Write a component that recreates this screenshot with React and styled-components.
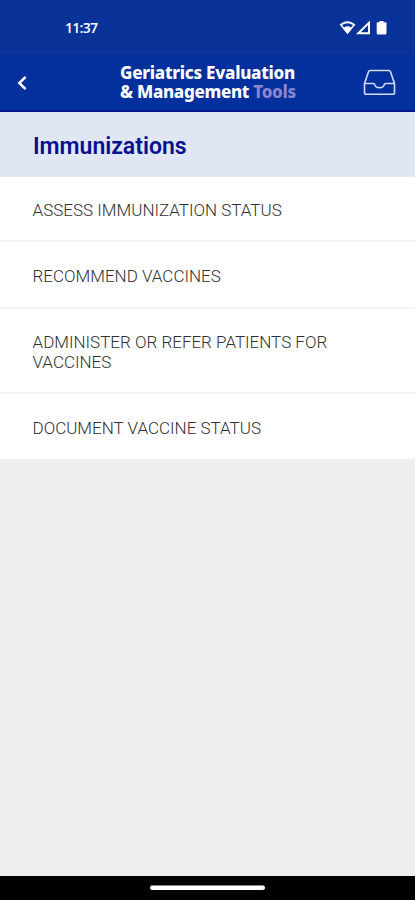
import styled, { createGlobalStyle } from 'styled-components'

const GlobalStyle = createGlobalStyle`
    body {
        margin: 0;
        background: #eeeeee;
    }
    * {
        box-sizing: border-box;
    }
`
const Screen = styled.div`
    display: flex;
    flex-direction: column;
    height: 900px;
    background: #eeeeee;
    font-family: Roboto, "Liberation Sans", sans-serif;
`
const StatusBar = styled.div`
    display: flex;
    align-items: center;
    justify-content: space-between;
    height: 55px;
    padding: 0 26px 0 65px;
    background: #0a3399;
    color: #fff;
`
const Clock = styled.span`
    font-family: "Open Sans", sans-serif;
    font-size: 14px;
    font-weight: 600;
    letter-spacing: -0.7px;
`
const StatusIcons = styled.div`
    display: flex;
    align-items: center;
`
const NavBar = styled.header`
    display: flex;
    align-items: center;
    height: 57px;
    padding: 0 19px 0 17px;
    background: #03309c;
    border-bottom: 2px solid #021a8c;
`
const IconButton = styled.button`
    display: flex;
    padding: 0;
    border: none;
    background: none;
    color: #fff;
`
const Brand = styled.h1`
    flex: 1;
    margin: -2px 0 0 93px;
    font-family: "Noto Sans", sans-serif;
    font-size: 17px;
    font-weight: 800;
    line-height: 19px;
    color: #fff;
    white-space: nowrap;
`
const BrandLine = styled.span`
    display: block;
    letter-spacing: ${props => props.$spacing};
`
const Muted = styled.span`
    color: #8c86cf;
`
const Title = styled.h2`
    display: flex;
    align-items: center;
    height: 65px;
    margin: 0;
    padding: 3px 33px 0;
    background: #e1e6f4;
    color: #06118f;
    font-size: 23px;
    font-weight: 600;
`
const List = styled.ul`
    margin: 0;
    padding: 0;
    list-style: none;
    background: #fff;
`
const Item = styled.li`
    display: flex;
    align-items: center;
    height: ${props => props.$height}px;
    padding: 3px 60px 0 32.5px;
    border-bottom: 2px solid #f5f5f5;
    color: #303030;
    font-size: 17px;
    font-weight: 300;
    line-height: 20px;

    &:nth-child(2),
    &:nth-child(3) {
        padding-top: 2px;
    }

    &:last-child {
        padding-top: 2px;
        border-bottom: none;
    }
`
const GestureBar = styled.div`
    display: flex;
    justify-content: center;
    height: 24px;
    margin-top: auto;
    padding-top: 9px;
    background: #000;
`
const Handle = styled.div`
    width: 115px;
    height: 5px;
    border-radius: 3px;
    background: #fff;
    border-top: 1px solid #888;
`

const items = [
    { label: 'ASSESS IMMUNIZATION STATUS', height: 65 },
    { label: 'RECOMMEND VACCINES', height: 67 },
    { label: 'ADMINISTER OR REFER PATIENTS FOR VACCINES', height: 85 },
    { label: 'DOCUMENT VACCINE STATUS', height: 65 },
]

const App = () => {
    return (
        <>
            <GlobalStyle />
            <Screen>
                <StatusBar>
                    <Clock>11:37</Clock>
                    <StatusIcons>
                        <svg width="50" height="16" viewBox="0 0 50 16">
                            <path d="M1.2 4.6Q8.500 -1.2 15.800 4.6L8.500 13.800Z" fill="#fff" stroke="#fff" strokeLinejoin="round" />
                            <path d="M3 5Q8.500 1.4 14 5L12 7.600Q8.500 5 5 7.600Z" fill="#0a3399" />
                            <path d="M19.300 13.300L30 2.800V13.300Z" fill="none" stroke="#fff" strokeWidth="1.9" />
                            <path d="M40.500 1h4v1.300h2q1 0 1 1V13q0 1.500-1.500 1.500h-7Q37.700 14.500 37.700 13V3.300q0-1 1-1h1.800Z" fill="#fff" />
                        </svg>
                    </StatusIcons>
                </StatusBar>
                <NavBar>
                    <IconButton aria-label="Back">
                        <svg width="10" height="16" viewBox="0 0 10 16">
                            <path d="M8.600 1.800L2.300 8L8.600 14.200" fill="none" stroke="#fff" strokeWidth="2.500" />
                        </svg>
                    </IconButton>
                    <Brand>
                        <BrandLine $spacing="-0.25px">Geriatrics Evaluation</BrandLine>
                        <BrandLine $spacing="-0.3px">&amp; Management <Muted>Tools</Muted></BrandLine>
                    </Brand>
                    <IconButton aria-label="Inbox">
                        <svg width="33" height="27" viewBox="0 0 33 27">
                            <path
                                d="M1.500 14.500L5.600 2.500Q6 1.500 7 1.500H26Q27 1.500 27.400 2.500L31.500 14.500V23.500Q31.500 25.300 29.700 25.300H3.300Q1.500 25.300 1.500 23.500ZM1.500 14.500H10.500Q11.500 14.500 11.700 15.600Q12.500 18.700 16.500 18.700Q20.500 18.700 21.300 15.600Q21.500 14.500 22.500 14.500H31.500"
                                fill="none"
                                stroke="#d3dcff"
                                strokeWidth="1.600"
                                strokeLinejoin="round"
                            />
                        </svg>
                    </IconButton>
                </NavBar>
                <Title>Immunizations</Title>
                <List>
                    {items.map(item => (
                        <Item key={item.label} $height={item.height}>{item.label}</Item>
                    ))}
                </List>
                <GestureBar>
                    <Handle />
                </GestureBar>
            </Screen>
        </>
    )
}

export default App
